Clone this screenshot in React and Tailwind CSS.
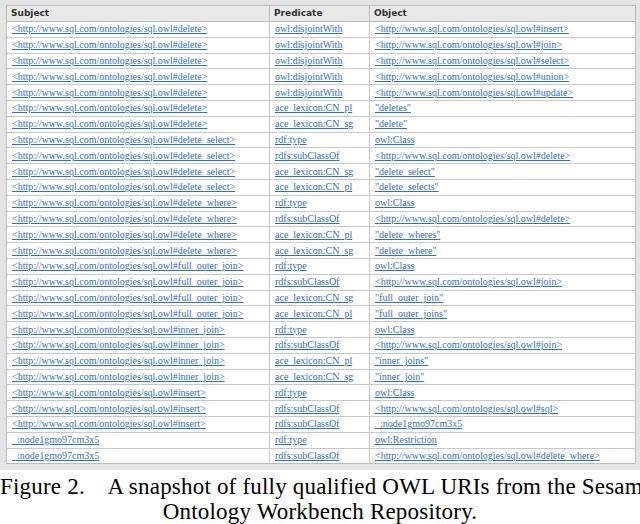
const U = "<http://www.sql.com/ontologies/sql.owl#";
const rows = [
  ["delete>", "owl:disjointWith", U + "insert>"],
  ["delete>", "owl:disjointWith", U + "join>"],
  ["delete>", "owl:disjointWith", U + "select>"],
  ["delete>", "owl:disjointWith", U + "union>"],
  ["delete>", "owl:disjointWith", U + "update>"],
  ["delete>", "ace_lexicon:CN_pl", '"deletes"'],
  ["delete>", "ace_lexicon:CN_sg", '"delete"'],
  ["delete_select>", "rdf:type", "owl:Class"],
  ["delete_select>", "rdfs:subClassOf", U + "delete>"],
  ["delete_select>", "ace_lexicon:CN_sg", '"delete_select"'],
  ["delete_select>", "ace_lexicon:CN_pl", '"delete_selects"'],
  ["delete_where>", "rdf:type", "owl:Class"],
  ["delete_where>", "rdfs:subClassOf", U + "delete>"],
  ["delete_where>", "ace_lexicon:CN_pl", '"delete_wheres"'],
  ["delete_where>", "ace_lexicon:CN_sg", '"delete_where"'],
  ["full_outer_join>", "rdf:type", "owl:Class"],
  ["full_outer_join>", "rdfs:subClassOf", U + "join>"],
  ["full_outer_join>", "ace_lexicon:CN_sg", '"full_outer_join"'],
  ["full_outer_join>", "ace_lexicon:CN_pl", '"full_outer_joins"'],
  ["inner_join>", "rdf:type", "owl:Class"],
  ["inner_join>", "rdfs:subClassOf", U + "join>"],
  ["inner_join>", "ace_lexicon:CN_pl", '"inner_joins"'],
  ["inner_join>", "ace_lexicon:CN_sg", '"inner_join"'],
  ["insert>", "rdf:type", "owl:Class"],
  ["insert>", "rdfs:subClassOf", U + "sql>"],
  ["insert>", "rdfs:subClassOf", "_:node1gmo97cm3x5"],
];

function Cell({ children, last }) {
  return (
    <div className={`h-[15.8px] flex items-center pl-[5px] border-b border-[#c8c8c8] overflow-hidden whitespace-nowrap ${last ? "" : "border-r"}`}>
      <span className="text-[#2f6fc9] underline text-[10px] leading-none" style={{ fontFamily: '"Liberation Serif", serif' }}>{children}</span>
    </div>
  );
}

export default function App() {
  return (
    <div className="w-[640px] h-[524px] bg-white">
      <div className="h-[470px] bg-[#e4e4e4] pt-[5px] pl-[6px] pr-[4px] pb-[6px] overflow-hidden">
        <div className="bg-white border border-[#bdbdbd] grid grid-cols-[263px_100px_1fr] h-[459px] overflow-hidden content-start">
          {["Subject", "Predicate", "Object"].map((h, i) => (
            <div key={h} className={`h-[16px] bg-[#e9e9e9] flex items-center pl-[4px] border-b border-[#bdbdbd] ${i < 2 ? "border-r" : ""}`}>
              <span className="text-[9px] font-bold text-[#333]" style={{ fontFamily: '"DejaVu Sans", sans-serif' }}>{h}</span>
            </div>
          ))}
          {rows.map((r, i) => [
            <Cell key={i + "a"}>{U + r[0]}</Cell>,
            <Cell key={i + "b"}>{r[1]}</Cell>,
            <Cell key={i + "c"} last>{r[2]}</Cell>,
          ])}
          <Cell>_:node1gmo97cm3x5</Cell>
          <Cell>rdf:type</Cell>
          <Cell last>owl:Restriction</Cell>
          <Cell>_:node1gmo97cm3x5</Cell>
          <Cell>rdfs:subClassOf</Cell>
          <Cell last>{U + "delete_where>"}</Cell>
        </div>
      </div>
      <div className="text-center text-[23px] leading-[25px] text-black pt-[4px] tracking-[0.2px]" style={{ fontFamily: '"Liberation Serif", serif' }}>
        <div className="whitespace-nowrap">Figure 2.&nbsp;&nbsp;&nbsp; A snapshot of fully qualified OWL URIs from the Sesame</div>
        <div>Ontology Workbench Repository.</div>
      </div>
    </div>
  );
}
